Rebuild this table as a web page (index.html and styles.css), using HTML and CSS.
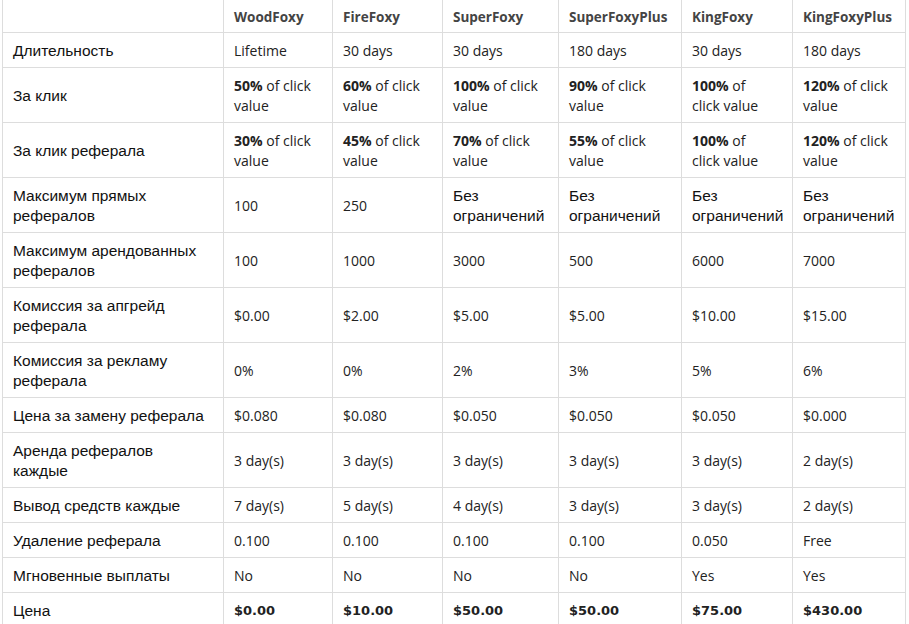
FILE: index.html
```html
<!DOCTYPE html>
<html lang="ru">
<head>
<meta charset="utf-8">
<title>Foxy plans</title>
<link rel="stylesheet" href="styles.css">
</head>
<body>
<table class="plans">
  <colgroup>
    <col class="c-label"><col class="c1"><col class="c2"><col class="c3"><col class="c4"><col class="c5"><col class="c6">
  </colgroup>
  <thead>
    <tr>
      <th></th>
      <th>WoodFoxy</th>
      <th>FireFoxy</th>
      <th>SuperFoxy</th>
      <th>SuperFoxyPlus</th>
      <th>KingFoxy</th>
      <th>KingFoxyPlus</th>
    </tr>
  </thead>
  <tbody>
    <tr>
      <td class="ru">Длительность</td>
      <td>Lifetime</td><td>30 days</td><td>30 days</td><td>180 days</td><td>30 days</td><td>180 days</td>
    </tr>
    <tr>
      <td class="ru">За клик</td>
      <td><b>50%</b> of click<br>value</td>
      <td><b>60%</b> of click<br>value</td>
      <td><b>100%</b> of click<br>value</td>
      <td><b>90%</b> of click<br>value</td>
      <td><b>100%</b> of<br>click value</td>
      <td><b>120%</b> of click<br>value</td>
    </tr>
    <tr>
      <td class="ru">За клик реферала</td>
      <td><b>30%</b> of click<br>value</td>
      <td><b>45%</b> of click<br>value</td>
      <td><b>70%</b> of click<br>value</td>
      <td><b>55%</b> of click<br>value</td>
      <td><b>100%</b> of<br>click value</td>
      <td><b>120%</b> of click<br>value</td>
    </tr>
    <tr>
      <td class="ru">Максимум прямых<br>рефералов</td>
      <td>100</td><td>250</td>
      <td class="ru">Без<br>ограничений</td>
      <td class="ru">Без<br>ограничений</td>
      <td class="ru">Без<br>ограничений</td>
      <td class="ru">Без<br>ограничений</td>
    </tr>
    <tr>
      <td class="ru">Максимум арендованных<br>рефералов</td>
      <td>100</td><td>1000</td><td>3000</td><td>500</td><td>6000</td><td>7000</td>
    </tr>
    <tr>
      <td class="ru">Комиссия за апгрейд<br>реферала</td>
      <td>$0.00</td><td>$2.00</td><td>$5.00</td><td>$5.00</td><td>$10.00</td><td>$15.00</td>
    </tr>
    <tr>
      <td class="ru">Комиссия за рекламу<br>реферала</td>
      <td>0%</td><td>0%</td><td>2%</td><td>3%</td><td>5%</td><td>6%</td>
    </tr>
    <tr>
      <td class="ru">Цена за замену реферала</td>
      <td>$0.080</td><td>$0.080</td><td>$0.050</td><td>$0.050</td><td>$0.050</td><td>$0.000</td>
    </tr>
    <tr>
      <td class="ru">Аренда рефералов<br>каждые</td>
      <td>3 day(s)</td><td>3 day(s)</td><td>3 day(s)</td><td>3 day(s)</td><td>3 day(s)</td><td>2 day(s)</td>
    </tr>
    <tr>
      <td class="ru">Вывод средств каждые</td>
      <td>7 day(s)</td><td>5 day(s)</td><td>4 day(s)</td><td>3 day(s)</td><td>3 day(s)</td><td>2 day(s)</td>
    </tr>
    <tr>
      <td class="ru">Удаление реферала</td>
      <td>0.100</td><td>0.100</td><td>0.100</td><td>0.100</td><td>0.050</td><td>Free</td>
    </tr>
    <tr>
      <td class="ru">Мгновенные выплаты</td>
      <td>No</td><td>No</td><td>No</td><td>No</td><td>Yes</td><td>Yes</td>
    </tr>
    <tr class="price">
      <td class="ru">Цена</td>
      <td>$0.00</td><td>$10.00</td><td>$50.00</td><td>$50.00</td><td>$75.00</td><td>$430.00</td>
    </tr>
  </tbody>
</table>
</body>
</html>
```

FILE: styles.css
```css
html, body {
  margin: 0;
  padding: 0;
  background: #ffffff;
}

body {
  padding-left: 2px;
  font-family: "Open Sans", "Liberation Sans", sans-serif;
  font-size: 14px;
  color: #222222;
}

.plans {
  margin-top: -1px;
  border-collapse: collapse;
  table-layout: fixed;
  width: 903px;
}

.c-label { width: 221px; }
.c1 { width: 109px; }
.c2 { width: 110px; }
.c3 { width: 116px; }
.c4 { width: 123px; }
.c5 { width: 111px; }
.c6 { width: 113px; }

.plans th,
.plans td {
  border: 1px solid #dddddd;
  text-align: left;
  vertical-align: middle;
  line-height: 20px;
  white-space: nowrap;
}

.plans th {
  padding: 7px 10px 5px;
  font-size: 13.5px;
  font-weight: 700;
  color: #444444;
}

.plans td {
  padding: 8px 10px 6px;
}

.plans td.ru {
  font-family: "Liberation Sans", Arial, sans-serif;
  font-size: 15.5px;
  font-weight: 400;
  color: #111111;
}

.plans b {
  font-weight: 700;
}

.price td {
  font-family: "DejaVu Sans", Verdana, sans-serif;
  font-size: 13px;
  font-weight: 700;
}
```
